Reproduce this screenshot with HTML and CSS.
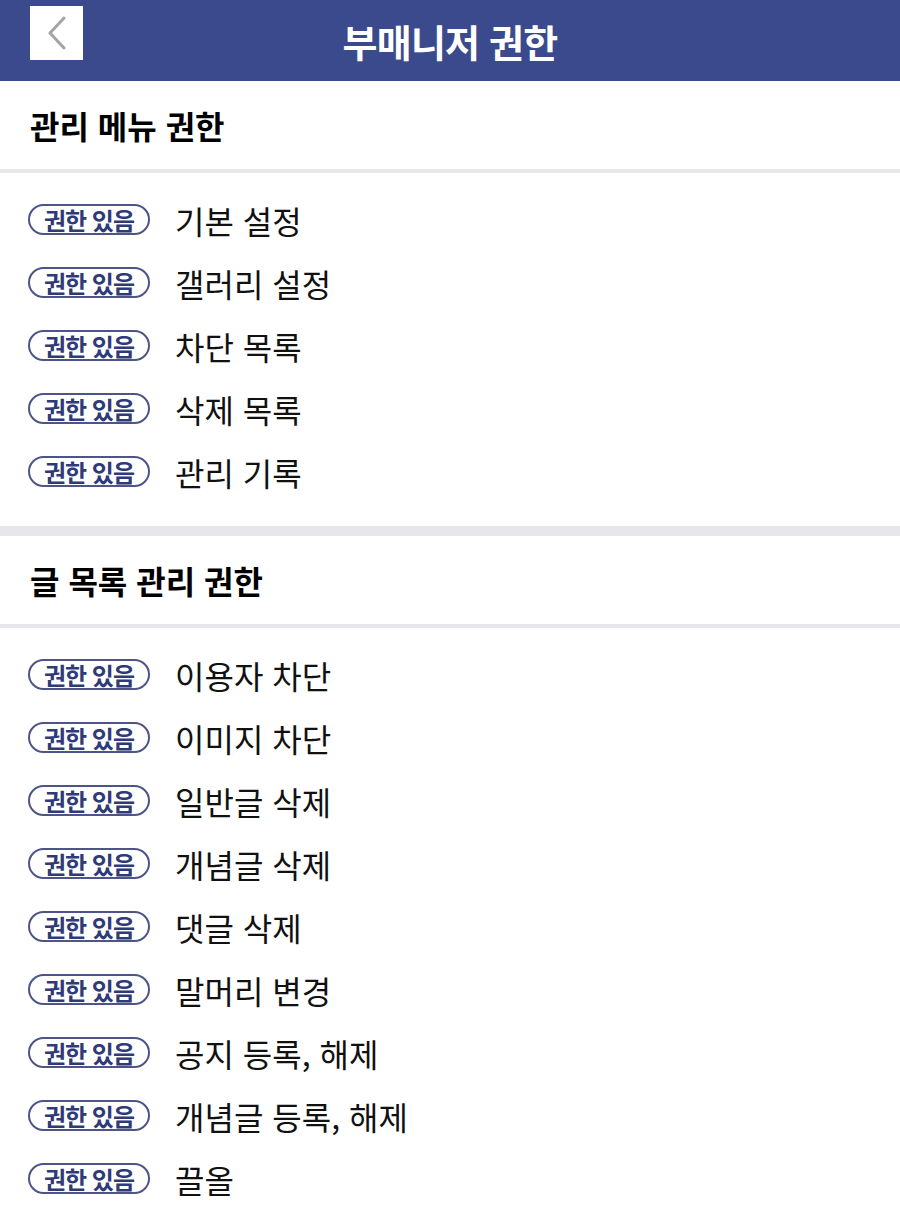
FILE: index.html
```html
<!DOCTYPE html>
<html lang="ko">
<head>
    <meta charset="UTF-8">
    <meta name="viewport" content="width=device-width, initial-scale=1.0">
    <title>부매니저 권한</title>
    <link rel="stylesheet" href="styles.css">
</head>
<body>
    <div class="header">
        <button class="back-btn">
            <svg width="20" height="34" viewBox="0 0 20 34">
                <polyline points="17,2 3,17 17,32" fill="none" stroke="#a4a4a4" stroke-width="3" stroke-linecap="round" stroke-linejoin="round"/>
            </svg>
        </button>
        <h1>부매니저 권한</h1>
    </div>

    <div class="section">
        <h2>관리 메뉴 권한</h2>
        <ul class="perm-list">
            <li><span class="badge">권한 있음</span>기본 설정</li>
            <li><span class="badge">권한 있음</span>갤러리 설정</li>
            <li><span class="badge">권한 있음</span>차단 목록</li>
            <li><span class="badge">권한 있음</span>삭제 목록</li>
            <li><span class="badge">권한 있음</span>관리 기록</li>
        </ul>
    </div>

    <div class="gap"></div>

    <div class="section">
        <h2>글 목록 관리 권한</h2>
        <ul class="perm-list">
            <li><span class="badge">권한 있음</span>이용자 차단</li>
            <li><span class="badge">권한 있음</span>이미지 차단</li>
            <li><span class="badge">권한 있음</span>일반글 삭제</li>
            <li><span class="badge">권한 있음</span>개념글 삭제</li>
            <li><span class="badge">권한 있음</span>댓글 삭제</li>
            <li><span class="badge">권한 있음</span>말머리 변경</li>
            <li><span class="badge">권한 있음</span>공지 등록, 해제</li>
            <li><span class="badge">권한 있음</span>개념글 등록, 해제</li>
            <li><span class="badge">권한 있음</span>끌올</li>
        </ul>
    </div>
</body>
</html>
```

FILE: styles.css
```css
body {
    font-family: "Noto Sans CJK KR", "Noto Sans", sans-serif;
    background-color: white;
    color: #111;
    margin: 0;
}
.header {
    background-color: #3b4a8c;
    height: 81px;
    display: flex;
    align-items: center;
    justify-content: center;
    position: relative;
}
.header h1 {
    margin: 0;
    color: white;
    font-size: 38px;
    font-weight: bold;
    letter-spacing: -0.8px;
}
.back-btn {
    position: absolute;
    left: 30px;
    top: 6px;
    width: 53px;
    height: 54px;
    background: white;
    border: none;
    padding: 0;
    display: flex;
    align-items: center;
    justify-content: center;
}
.section h2 {
    margin: 0;
    padding: 0 30px;
    height: 88px;
    display: flex;
    align-items: center;
    font-size: 32px;
    font-weight: bold;
    color: #000;
    border-bottom: 4px solid #e6e6eb;
}
.perm-list {
    list-style: none;
    margin: 0;
    padding: 15px 0 23px 28px;
}
.perm-list li {
    display: flex;
    align-items: center;
    height: 63px;
    font-size: 32px;
    color: #111;
}
.badge {
    box-sizing: border-box;
    width: 122px;
    height: 31px;
    border: 2px solid #4d5588;
    border-radius: 16px;
    display: flex;
    align-items: center;
    justify-content: center;
    font-size: 24px;
    font-weight: bold;
    letter-spacing: -1px;
    color: #2f3a78;
    margin-right: 25px;
}
.gap {
    height: 10px;
    background-color: #e6e6eb;
}
```
